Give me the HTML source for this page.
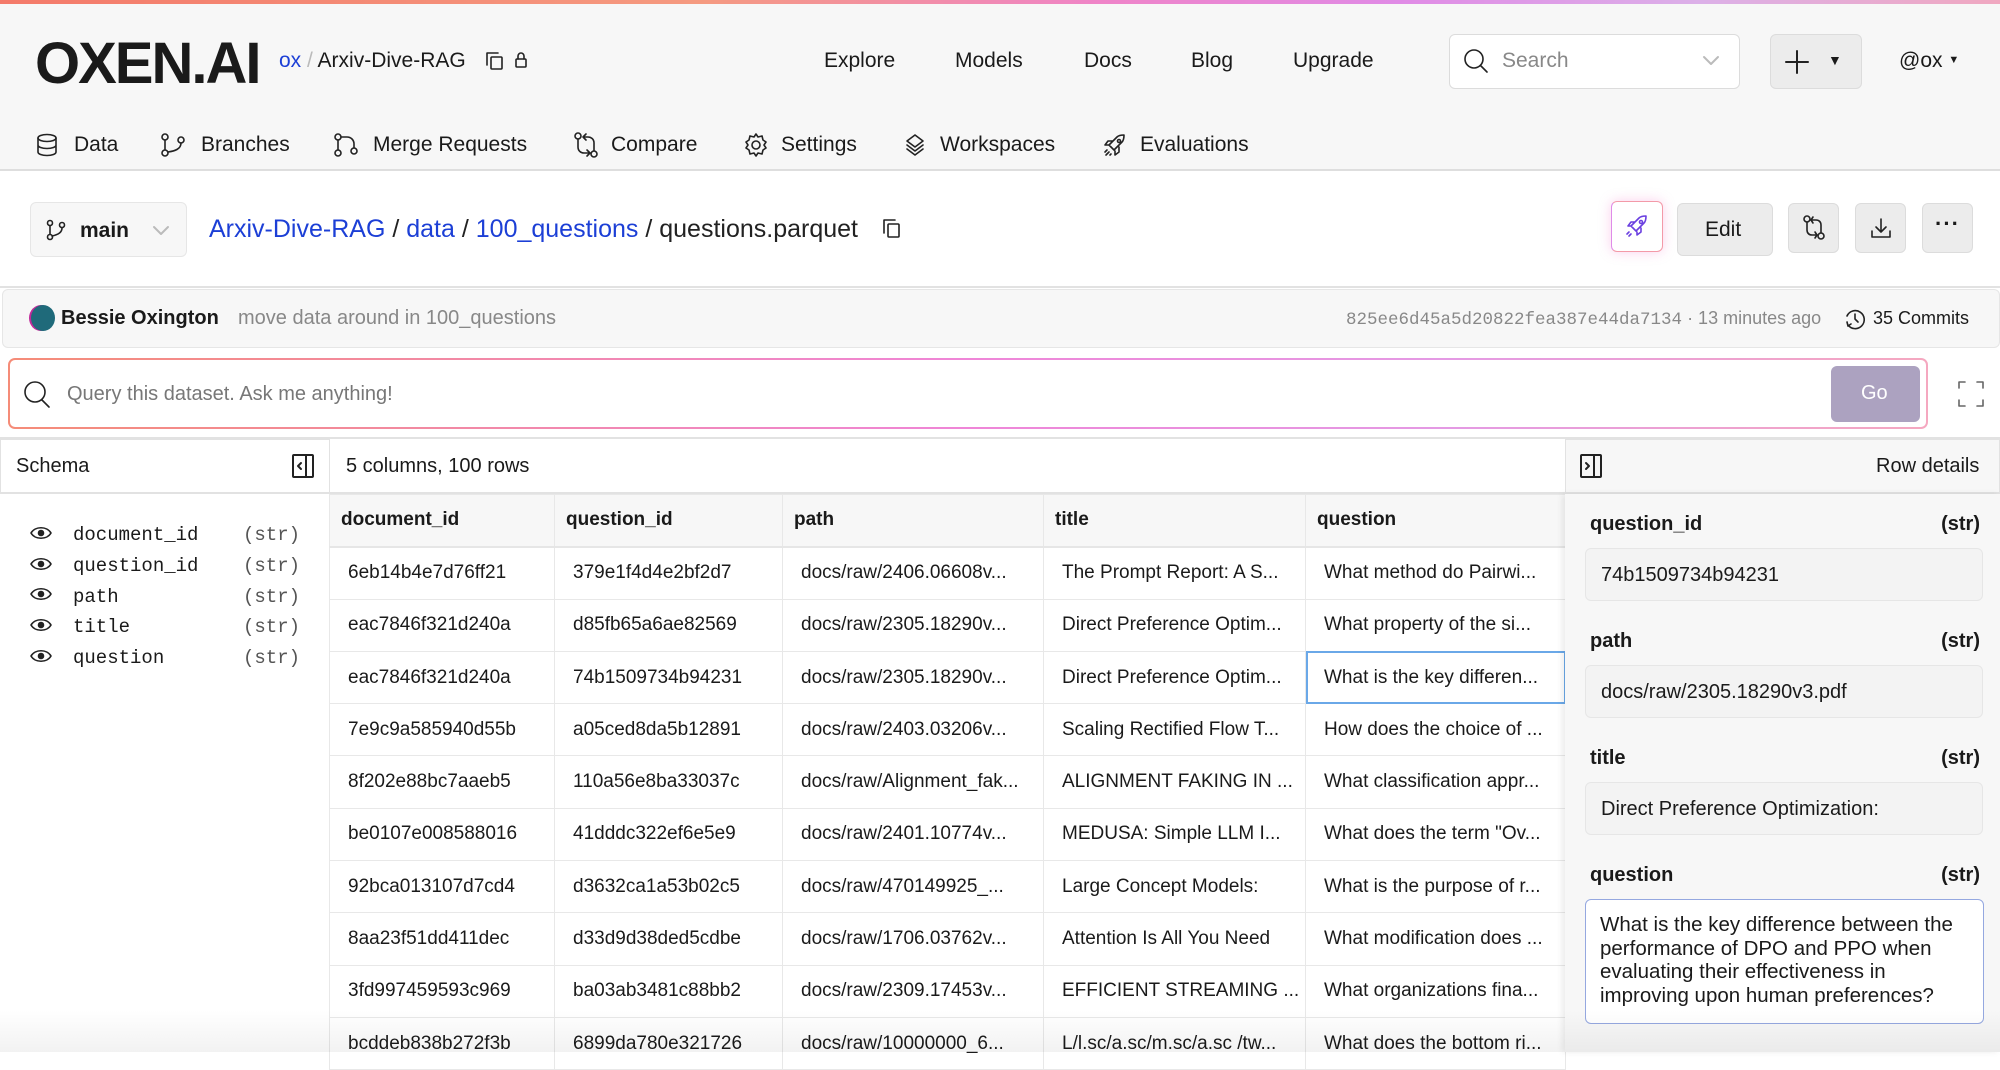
<!DOCTYPE html>
<html><head><meta charset="utf-8">
<style>
*{box-sizing:border-box;margin:0;padding:0}
body{width:2000px;height:1052px;overflow:hidden;background:#fff;font-family:"Liberation Sans",sans-serif;color:#1a1a1a;position:relative}
.a{position:absolute}
.t{position:absolute;white-space:nowrap}
svg{position:absolute;fill:none;stroke:#222;stroke-width:1.6;stroke-linecap:round;stroke-linejoin:round}
.nav{font-size:21px;top:49px}
.tab{font-size:21px;top:133px}
.btn{position:absolute;background:#ececec;border:1px solid #dcdcdc;border-radius:6px}
.mono{font-family:"Liberation Mono",monospace}
table{position:absolute;left:329px;top:494px;border-collapse:collapse;font-size:19px;table-layout:fixed}
td,th{height:52.3px;border:1px solid #e8e8e8;white-space:nowrap;overflow:hidden;text-align:left;padding-left:18px}
th{background:#f7f7f7;font-weight:bold;padding-left:11px;border-bottom:2px solid #e6e6e6}
.lbl{position:absolute;font-size:20px;font-weight:bold;left:1590px;width:390px}
.lbl span{float:right}
.box{position:absolute;left:1585px;width:398px;height:53px;background:#f3f3f3;border:1px solid #e6e6e6;border-radius:6px;font-size:20px;padding:15px 0 0 15px}
</style></head><body>
<div class="a" style="left:0;top:0;width:2000px;height:4px;background:linear-gradient(90deg,#f47a6a,#f59a80 35%,#ef84c8 55%,#e08be6 70%,#dcb0e8 85%,#f0a8c0)"></div>
<div class="a" style="left:0;top:4px;width:2000px;height:167px;background:#f7f7f7;border-bottom:2px solid #dedede"></div>
<div class="t" style="left:35px;top:30px;font-size:58px;font-weight:900;letter-spacing:-2px">OXEN.AI</div>
<div class="t" style="left:279px;top:49px;font-size:21px;color:#1c3fd6">ox <span style="color:#bbb">/</span> <span style="color:#1a1a1a">Arxiv-Dive-RAG</span></div>
<svg style="left:484px;top:50px" width="22" height="22" viewBox="0 0 22 22"><path d="M3 15V3h11"/><rect x="7" y="7" width="11" height="12" rx="1"/></svg>
<svg style="left:513px;top:50px" width="16" height="20" viewBox="0 0 16 20"><rect x="3" y="9" width="10" height="8" rx="1"/><path d="M5 9V6a3 3 0 0 1 6 0v3"/></svg>
<div class="t nav" style="left:824px">Explore</div>
<div class="t nav" style="left:955px">Models</div>
<div class="t nav" style="left:1084px">Docs</div>
<div class="t nav" style="left:1191px">Blog</div>
<div class="t nav" style="left:1293px">Upgrade</div>
<div class="a" style="left:1449px;top:34px;width:291px;height:55px;background:#fff;border:1px solid #dcdcdc;border-radius:6px"></div>
<svg style="left:1462px;top:47px" width="28" height="28" viewBox="0 0 28 28"><circle cx="12" cy="12" r="9"/><path d="M19 19l6 6"/></svg>
<div class="t" style="left:1502px;top:49px;font-size:21px;color:#888">Search</div>
<svg style="left:1702px;top:54px;stroke:#bbb;stroke-width:2" width="18" height="14" viewBox="0 0 18 14"><path d="M2 3l7 7 7-7"/></svg>
<div class="btn" style="left:1770px;top:34px;width:92px;height:55px"></div>
<svg style="left:1784px;top:49px;stroke-width:2" width="26" height="26" viewBox="0 0 26 26"><path d="M13 2v22M2 13h22"/></svg>
<div class="t" style="left:1828px;top:52px;font-size:14px">▼</div>
<div class="t" style="left:1899px;top:49px;font-size:21px">@ox <span style="font-size:11px;vertical-align:4px">▼</span></div>

<svg style="left:36px;top:133px" width="22" height="24" viewBox="0 0 22 24"><ellipse cx="11" cy="5" rx="9" ry="3.5"/><path d="M2 5v14c0 2 4 3.5 9 3.5s9-1.5 9-3.5V5M2 12c0 2 4 3.5 9 3.5s9-1.5 9-3.5"/></svg>
<div class="t tab" style="left:74px">Data</div>
<svg style="left:161px;top:133px" width="26" height="24" viewBox="0 0 26 24"><circle cx="4" cy="4" r="3"/><circle cx="4" cy="20" r="3"/><circle cx="20" cy="7" r="3"/><path d="M4 7v10M20 10c0 6-6 8-13 9"/></svg>
<div class="t tab" style="left:201px">Branches</div>
<svg style="left:334px;top:133px" width="26" height="24" viewBox="0 0 26 24"><circle cx="4" cy="4" r="3"/><circle cx="4" cy="20" r="3"/><circle cx="20" cy="18" r="3"/><path d="M4 7v10M7 4h6c4 0 7 3 7 7v4"/></svg>
<div class="t tab" style="left:373px">Merge Requests</div>
<svg style="left:573px;top:132px" width="26" height="26" viewBox="0 0 26 26"><circle cx="5" cy="4" r="3"/><circle cx="21" cy="22" r="3"/><path d="M5 7v8c0 4 3 6 6 6h5M21 19v-8c0-4-3-6-6-6h-5M13 2l-3 3 3 3M14 18l3 3-3 3"/></svg>
<div class="t tab" style="left:611px">Compare</div>
<svg style="left:743px;top:132px" width="26" height="26" viewBox="0 0 26 26"><circle cx="13" cy="13" r="4"/><path d="M13 2l2 3 4-1 1 4 3 2-2 3 2 3-3 2-1 4-4-1-2 3-2-3-4 1-1-4-3-2 2-3-2-3 3-2 1-4 4 1z"/></svg>
<div class="t tab" style="left:781px">Settings</div>
<svg style="left:904px;top:133px" width="22" height="24" viewBox="0 0 22 24"><path d="M11 2l8 6-8 6-8-6zM3 12l8 6 8-6M3 16l8 6 8-6"/></svg>
<div class="t tab" style="left:940px">Workspaces</div>
<svg style="left:1103px;top:133px" width="24" height="24" viewBox="0 0 24 24"><path d="M9 15l-3-3 8-8c2-2 5-2 7-2 0 2 0 5-2 7l-8 8zM6 12l-4 0 3-4h5M12 18v4l4-3v-5M4 17l-2 2M6 19l-3 3M8 21l-1 1"/><circle cx="16" cy="8" r="1.5"/></svg>
<div class="t tab" style="left:1140px">Evaluations</div>

<div class="a" style="left:30px;top:202px;width:157px;height:55px;background:#f7f7f7;border:1px solid #e6e6e6;border-radius:6px"></div>
<svg style="left:46px;top:219px" width="20" height="22" viewBox="0 0 20 22"><circle cx="4" cy="4" r="2.5"/><circle cx="4" cy="18" r="2.5"/><circle cx="16" cy="6" r="2.5"/><path d="M4 7v8M16 9c0 5-5 7-10 8"/></svg>
<div class="t" style="left:80px;top:219px;font-size:21px;font-weight:bold">main</div>
<svg style="left:152px;top:224px;stroke:#bbb;stroke-width:2" width="18" height="14" viewBox="0 0 18 14"><path d="M2 3l7 7 7-7"/></svg>
<div class="t" style="left:209px;top:215px;font-size:25px;color:#1c3fd6">Arxiv-Dive-RAG <span style="color:#222">/</span> data <span style="color:#222">/</span> 100_questions <span style="color:#222">/ questions.parquet</span></div>
<svg style="left:881px;top:217px" width="22" height="24" viewBox="0 0 22 24"><path d="M3 16V3h11"/><rect x="7" y="7" width="11" height="13" rx="1"/></svg>

<div class="a" style="left:1611px;top:201px;width:52px;height:51px;background:#fff;border:1.5px solid #f39aa8;border-left-color:#df8be8;border-radius:6px;box-shadow:0 0 12px rgba(240,120,200,.35)"></div>
<svg style="left:1625px;top:214px;stroke:#6a3fe0" width="24" height="24" viewBox="0 0 24 24"><path d="M9 15l-3-3 8-8c2-2 5-2 7-2 0 2 0 5-2 7l-8 8zM6 12H3l3-4h4M12 18v3l4-3v-4M4 18l-2 2M6 20l-2 2"/><circle cx="16" cy="8" r="1.5"/></svg>
<div class="btn" style="left:1677px;top:203px;width:96px;height:53px"></div>
<div class="t" style="left:1705px;top:218px;font-size:21px">Edit</div>
<div class="btn" style="left:1788px;top:203px;width:51px;height:50px"></div>
<svg style="left:1802px;top:215px" width="24" height="26" viewBox="0 0 24 26"><circle cx="5" cy="4" r="3"/><circle cx="19" cy="21" r="3"/><path d="M5 7v8c0 3 2 5 5 5h5M19 18v-8c0-3-2-5-5-5h-4M11 2l-2 3 2 3M13 17l2 3-2 3"/></svg>
<div class="btn" style="left:1855px;top:203px;width:51px;height:50px"></div>
<svg style="left:1869px;top:216px" width="24" height="24" viewBox="0 0 24 24"><path d="M12 3v13M7 11l5 5 5-5M3 15v6h18v-6"/></svg>
<div class="btn" style="left:1922px;top:203px;width:51px;height:50px"></div>
<div class="t" style="left:1935px;top:211px;font-size:22px;font-weight:bold;letter-spacing:1px">···</div>

<div class="a" style="left:0;top:286px;width:2000px;height:2px;background:#e2e2e2"></div>
<div class="a" style="left:2px;top:289px;width:1998px;height:59px;background:#f7f7f7;border:1px solid #e6e6e6;border-radius:6px"></div>
<div class="a" style="left:31px;top:305px;width:24px;height:26px;border-radius:50%;background:#1f6a7a;box-shadow:-2px 0 0 #c02a9a"></div>
<div class="t" style="left:61px;top:307px;font-size:20px;font-weight:bold">Bessie Oxington</div>
<div class="t" style="left:238px;top:307px;font-size:20px;color:#888">move data around in 100_questions</div>
<div class="t" style="left:1346px;top:308px;font-size:18px;color:#888"><span class="mono" style="font-size:17.5px">825ee6d45a5d20822fea387e44da7134</span> · 13 minutes ago</div>
<svg style="left:1843px;top:307px" width="24" height="24" viewBox="0 0 24 24"><path d="M5 18a9 9 0 1 0-1-9M12 7v5l3 3M4 15l1 4 3-2"/></svg>
<div class="t" style="left:1873px;top:308px;font-size:18px">35 Commits</div>

<div class="a" style="left:8px;top:358px;width:1920px;height:71px;border-radius:7px;background:linear-gradient(90deg,#f58c78,#ef86d8 50%,#e49ae4 75%,#f5a8c0);padding:2px"><div style="width:100%;height:100%;background:#fff;border-radius:5px"></div></div>
<svg style="left:22px;top:380px" width="30" height="30" viewBox="0 0 30 30"><circle cx="13" cy="12" r="10"/><path d="M20 20l7 7"/></svg>
<div class="t" style="left:67px;top:383px;font-size:20px;color:#777">Query this dataset. Ask me anything!</div>
<div class="a" style="left:1831px;top:366px;width:89px;height:56px;background:#aca2c0;border-radius:6px"></div>
<div class="t" style="left:1861px;top:382px;font-size:20px;color:#fff">Go</div>
<svg style="left:1958px;top:381px;stroke:#666" width="26" height="26" viewBox="0 0 26 26"><path d="M1 7V1h6M19 1h6v6M25 19v6h-6M7 25H1v-6"/></svg>

<div class="a" style="left:0;top:437px;width:2000px;height:2px;background:#e2e2e2"></div>
<div class="a" style="left:0;top:439px;width:330px;height:54px;border:1px solid #e2e2e2"></div>
<div class="t" style="left:16px;top:455px;font-size:20px">Schema</div>
<svg style="left:292px;top:454px;stroke-width:2" width="22" height="24" viewBox="0 0 22 24"><rect x="1" y="1" width="20" height="22" rx="1"/><path d="M14 1v22M9 9l-3 3 3 3"/></svg>
<div class="t" style="left:346px;top:455px;font-size:20px">5 columns, 100 rows</div>
<div class="a" style="left:1565px;top:439px;width:435px;height:54px;background:#f7f7f7;border:1px solid #e2e2e2"></div>
<svg style="left:1580px;top:454px;stroke-width:2" width="22" height="24" viewBox="0 0 22 24"><rect x="1" y="1" width="20" height="22" rx="1"/><path d="M14 1v22M6 9l3 3-3 3"/></svg>
<div class="t" style="left:1876px;top:455px;font-size:20px">Row details</div>
<div class="a" style="left:0;top:492px;width:2000px;height:2px;background:#e2e2e2"></div>
<div class="a" style="left:329px;top:494px;width:1px;height:558px;background:#e2e2e2"></div>

<div class="mono" style="position:absolute;left:0;top:520px;font-size:19px;line-height:30.8px">
<div style="position:absolute;left:73px;top:0;white-space:pre">document_id
question_id
path
title
question</div>
<div style="position:absolute;left:243px;top:0;white-space:pre;color:#555">(str)
(str)
(str)
(str)
(str)</div></div>
<svg style="left:29px;top:523px" width="24" height="150" viewBox="0 0 24 150"><g><path d="M2 10c4-7 16-7 20 0c-4 7-16 7-20 0z"/><circle cx="12" cy="10" r="2.5" fill="#222"/></g><g transform="translate(0,31)"><path d="M2 10c4-7 16-7 20 0c-4 7-16 7-20 0z"/><circle cx="12" cy="10" r="2.5" fill="#222"/></g><g transform="translate(0,61)"><path d="M2 10c4-7 16-7 20 0c-4 7-16 7-20 0z"/><circle cx="12" cy="10" r="2.5" fill="#222"/></g><g transform="translate(0,92)"><path d="M2 10c4-7 16-7 20 0c-4 7-16 7-20 0z"/><circle cx="12" cy="10" r="2.5" fill="#222"/></g><g transform="translate(0,123)"><path d="M2 10c4-7 16-7 20 0c-4 7-16 7-20 0z"/><circle cx="12" cy="10" r="2.5" fill="#222"/></g></svg>

<table>
<colgroup><col style="width:225px"><col style="width:228px"><col style="width:261px"><col style="width:262px"><col style="width:260px"></colgroup>
<tr><th>document_id</th><th>question_id</th><th>path</th><th>title</th><th>question</th></tr>
<tr><td>6eb14b4e7d76ff21</td><td>379e1f4d4e2bf2d7</td><td>docs/raw/2406.06608v...</td><td>The Prompt Report: A S...</td><td>What method do Pairwi...</td></tr>
<tr><td>eac7846f321d240a</td><td>d85fb65a6ae82569</td><td>docs/raw/2305.18290v...</td><td>Direct Preference Optim...</td><td>What property of the si...</td></tr>
<tr><td>eac7846f321d240a</td><td>74b1509734b94231</td><td>docs/raw/2305.18290v...</td><td>Direct Preference Optim...</td><td style="outline:2px solid #6aa8e8;outline-offset:-2px">What is the key differen...</td></tr>
<tr><td>7e9c9a585940d55b</td><td>a05ced8da5b12891</td><td>docs/raw/2403.03206v...</td><td>Scaling Rectified Flow T...</td><td>How does the choice of ...</td></tr>
<tr><td>8f202e88bc7aaeb5</td><td>110a56e8ba33037c</td><td>docs/raw/Alignment_fak...</td><td>ALIGNMENT FAKING IN ...</td><td>What classification appr...</td></tr>
<tr><td>be0107e008588016</td><td>41dddc322ef6e5e9</td><td>docs/raw/2401.10774v...</td><td>MEDUSA: Simple LLM I...</td><td>What does the term "Ov...</td></tr>
<tr><td>92bca013107d7cd4</td><td>d3632ca1a53b02c5</td><td>docs/raw/470149925_...</td><td>Large Concept Models:</td><td>What is the purpose of r...</td></tr>
<tr><td>8aa23f51dd411dec</td><td>d33d9d38ded5cdbe</td><td>docs/raw/1706.03762v...</td><td>Attention Is All You Need</td><td>What modification does ...</td></tr>
<tr><td>3fd997459593c969</td><td>ba03ab3481c88bb2</td><td>docs/raw/2309.17453v...</td><td>EFFICIENT STREAMING ...</td><td>What organizations fina...</td></tr>
<tr><td>bcddeb838b272f3b</td><td>6899da780e321726</td><td>docs/raw/10000000_6...</td><td>L/l.sc/a.sc/m.sc/a.sc /tw...</td><td>What does the bottom ri...</td></tr>
</table>

<div class="a" style="left:1565px;top:494px;width:435px;height:558px;background:#f7f7f7;box-shadow:-3px 0 6px rgba(0,0,0,.08)"></div>
<div class="lbl" style="top:513px">question_id<span>(str)</span></div>
<div class="box" style="top:548px">74b1509734b94231</div>
<div class="lbl" style="top:630px">path<span>(str)</span></div>
<div class="box" style="top:665px">docs/raw/2305.18290v3.pdf</div>
<div class="lbl" style="top:747px">title<span>(str)</span></div>
<div class="box" style="top:782px">Direct Preference Optimization:</div>
<div class="lbl" style="top:864px">question<span>(str)</span></div>
<div class="a" style="left:1585px;top:899px;width:399px;height:125px;background:#fff;border:1.5px solid #95a8e0;border-radius:6px;font-size:20.5px;line-height:23.5px;padding:13px 10px 0 14px">What is the key difference between the performance of DPO and PPO when evaluating their effectiveness in improving upon human preferences?</div>
<div class="a" style="left:0;top:1010px;width:2000px;height:42px;background:linear-gradient(180deg,rgba(0,0,0,0),rgba(0,0,0,.05))"></div>
</body></html>
